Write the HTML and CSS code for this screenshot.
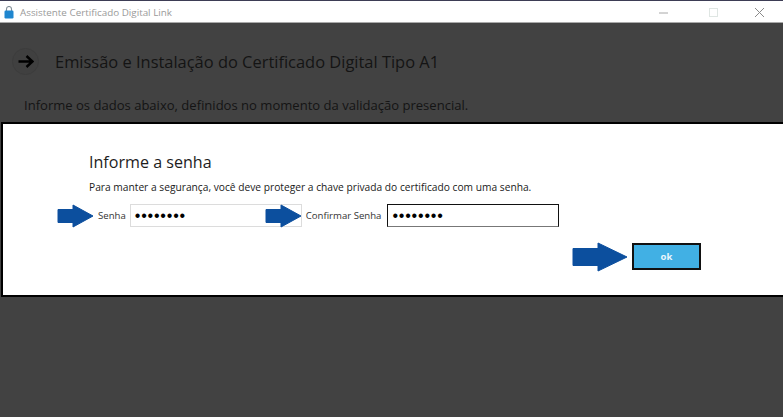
FILE: index.html
```html
<!DOCTYPE html>
<html lang="pt-BR">
<head>
<meta charset="utf-8">
<title>Assistente Certificado Digital Link</title>
<link rel="stylesheet" href="styles.css">
</head>
<body>
<div class="window">
  <header class="titlebar">
    <svg class="app-icon" viewBox="0 0 10 13" width="10" height="13"><path d="M2.5 5V3a2.5 2.5 0 0 1 5 0v2" fill="none" stroke="#7f8c96" stroke-width="1.1"/><rect x="0.5" y="4.5" width="9" height="8" rx="1.2" fill="#1f86cf"/></svg>
    <span class="app-title">Assistente Certificado Digital Link</span>
    <div class="controls">
      <svg viewBox="0 0 46 22" width="46" height="22"><path d="M14 12h9" stroke="#a8a8a8" stroke-width="1"/></svg>
      <svg viewBox="0 0 46 22" width="46" height="22"><rect x="18.5" y="7.5" width="8" height="8" fill="none" stroke="#dfe6e3" stroke-width="1"/></svg>
      <svg viewBox="0 0 46 22" width="46" height="22"><path d="M18 7l9 9M27 7l-9 9" stroke="#8a8a8a" stroke-width="1"/></svg>
    </div>
  </header>
  <main class="content">
    <div class="heading">
      <span class="back"><svg viewBox="0 0 16 13" width="16" height="13"><path d="M0.5 6.5H14M8.5 1L14.5 6.5L8.5 12" fill="none" stroke="#000" stroke-width="2.4"/></svg></span>
      <h1>Emissão e Instalação do Certificado Digital Tipo A1</h1>
    </div>
    <p class="intro">Informe os dados abaixo, definidos no momento da validação presencial.</p>
  </main>
  <section class="dialog">
    <h2>Informe a senha</h2>
    <p class="note">Para manter a segurança, você deve proteger a chave privada do certificado com uma senha.</p>
    <div class="fields">
      <label class="lbl">Senha</label>
      <div class="input input-a">••••••••</div>
      <label class="lbl lbl-b">Confirmar Senha</label>
      <div class="input input-b">••••••••</div>
    </div>
    <div class="actions"><button class="ok">ok</button></div>
    <svg class="arrow arrow-1" viewBox="0 0 37 24"><path d="M1 5.5H16V1L36 12L16 23V18.5H1Z" fill="#0c4f9e" stroke="#0c4f9e" stroke-linejoin="round"/></svg>
    <svg class="arrow arrow-2" viewBox="0 0 37 24"><path d="M1 5.5H16V1L36 12L16 23V18.5H1Z" fill="#0c4f9e" stroke="#0c4f9e" stroke-linejoin="round"/></svg>
    <svg class="arrow arrow-3" viewBox="0 0 56 30"><path d="M1 6.5H26V1L55 15L26 29V23.5H1Z" fill="#0c4f9e" stroke="#0c4f9e" stroke-linejoin="round"/></svg>
  </section>
</div>
</body>
</html>
```
FILE: styles.css
```css
* { box-sizing: border-box; }
html, body { margin: 0; padding: 0; }
body { width: 783px; height: 417px; overflow: hidden; background: #424242; font-family: "Open Sans", "Noto Sans", sans-serif; }
.window { position: relative; width: 783px; height: 417px; display: flex; flex-direction: column; }
.titlebar { height: 23px; flex: none; background: #fff; border-top: 1px solid #3d3d55; border-bottom: 1px solid #a9a9a9; display: flex; align-items: center; padding-left: 4px; }
.app-icon { flex: none; margin-top: 1px; }
.app-title { margin-left: 6px; font-size: 9.85px; color: #9a9a9a; }
.controls { margin-left: auto; display: flex; padding-right: 0; }
.controls svg { display: block; }
.content { flex: 1; padding: 25px 24px 0 12px; color: #151515; }
.heading { display: flex; align-items: center; gap: 16px; }
.back { width: 27px; height: 27px; border-radius: 50%; border: 1px solid #3c3c3c; display: flex; align-items: center; justify-content: center; background: #404040; }
h1 { margin: 0; font-size: 16.45px; font-weight: 400; color: #141414; white-space: nowrap; }
.intro { margin: 21px 0 0 12px; font-size: 13.05px; color: #141414; white-space: nowrap; }
.dialog { position: absolute; left: 1px; right: 0; top: 122px; height: 175px; background: #fff; border: 2px solid #000; border-right: 0; padding: 26px 0 0 86px; }
h2 { margin: 0; font-size: 16.1px; font-weight: 400; color: #1d1d1d; line-height: 24px; }
.note { margin: 6px 0 0; font-size: 10.23px; line-height: 14px; color: #1a1a1a; white-space: nowrap; }
.fields { display: flex; align-items: center; margin: 10px 0 0 9px; height: 23px; }
.lbl { font-size: 9.6px; color: #333; white-space: nowrap; }
.input { height: 23px; font-family: "Liberation Sans", sans-serif; font-size: 16px; letter-spacing: 0.8px; line-height: 21px; padding-left: 4px; color: #000; background: #fff; }
.input-a { width: 172px; margin-left: 4px; border: 1px solid #dcdcdc; }
.lbl-b { margin-left: 4px; }
.input-b { width: 172px; margin-left: 6px; border: 1px solid #111; border-bottom-color: #777; }
.actions { display: flex; margin: 16px 0 0 543px; }
.ok { width: 69px; height: 27px; padding: 0; background: #41b0e4; border: 2px solid #111; color: #eaf6fc; font-family: "Open Sans", sans-serif; font-size: 9.5px; font-weight: 700; }
.arrow { position: absolute; display: block; }
.arrow-1 { left: 54px; top: 80px; width: 37px; height: 24px; }
.arrow-2 { left: 262px; top: 80px; width: 37px; height: 24px; }
.arrow-3 { left: 569px; top: 118px; width: 56px; height: 30px; }
```
